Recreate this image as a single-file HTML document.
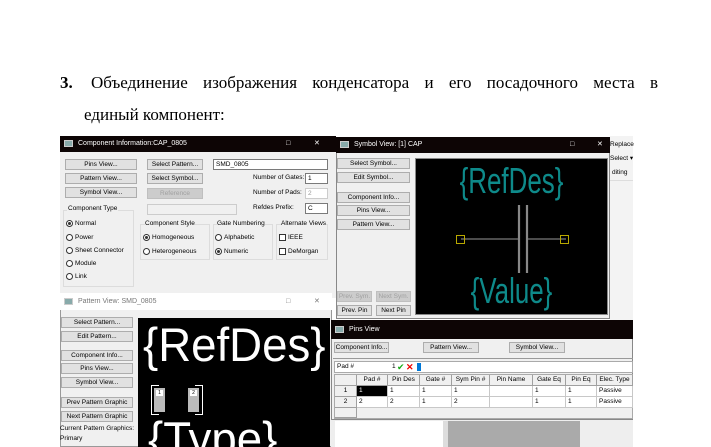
<!DOCTYPE html>
<html><head><meta charset="utf-8"><style>
*{margin:0;padding:0;box-sizing:border-box}
body{width:711px;height:447px;background:#fff;position:relative;overflow:hidden;font-family:"Liberation Sans",sans-serif}
.a{position:absolute}
.t{font-family:"Liberation Serif","DejaVu Serif",serif;font-size:17px;color:#000;white-space:nowrap}
.s{font-size:6.5px;color:#000;white-space:nowrap;line-height:1}
.btn{position:absolute;background:#e1e1e1;border:1px solid #adadad;font-size:6.5px;text-align:center;line-height:9px;color:#000;white-space:nowrap}
.dis{color:#a0a0a0;background:#ccc;border-color:#bfbfbf}
.box{position:absolute;background:#fff;border:1px solid #7a7a7a;font-size:6.5px;line-height:9px;padding-left:2px}
.grp{position:absolute;border:1px solid #dcdcdc}
.rd{position:absolute;width:7px;height:7px;border:1px solid #333;border-radius:50%;background:#fff}
.rd.on::after{content:"";position:absolute;left:1px;top:1px;width:3px;height:3px;border-radius:50%;background:#333}
.cb{position:absolute;width:7px;height:7px;border:1px solid #333;background:#fff}
.tb{position:absolute;background:#0d0505;color:#fff;font-size:7px;line-height:15px;padding-left:18px}
.ic{position:absolute;left:4px;top:4px;width:9px;height:7px;background:#8aa;border:1px solid #ccc}
.cell{position:absolute;border-right:1px solid #c8c8c8;border-bottom:1px solid #c8c8c8;font-size:6.5px;line-height:9px;padding-left:2px;background:#fff;white-space:nowrap;overflow:hidden}
.hd{background:#f0f0f0;text-align:center;padding-left:0;border-color:#a0a0a0}
.sym{color:#0e8a8a;font-size:36px;line-height:36px;transform:scaleX(0.72);transform-origin:center top;text-align:center;white-space:nowrap}
</style></head><body>
<div class="a t" style="left:60px;top:73px;font-weight:bold">3.</div>
<div class="a t" style="left:91px;top:73px;width:567px;text-align:justify;text-align-last:justify">Объединение изображения конденсатора и его посадочного места в</div>
<div class="a t" style="left:84px;top:105px">единый компонент:</div>

<div class="a" style="left:610px;top:136px;width:23px;height:184px;background:#f3f3f3"></div>
<div class="a s" style="left:610px;top:142px">Replace</div>
<div class="a s" style="left:610px;top:156px">Select ▾</div>
<div class="a s" style="left:612px;top:170px">diting</div>
<div class="a" style="left:610px;top:180px;width:23px;height:1px;background:#ddd"></div>

<div class="a" style="left:60px;top:136px;width:276px;height:162px;background:#f0f0f0"></div>
<div class="tb" style="left:60px;top:136px;width:276px;height:16px"><div class="ic"></div>Component Information:CAP_0805<span style="position:absolute;left:226px">□</span><span style="position:absolute;left:254px">✕</span></div>
<div class="btn" style="left:65px;top:159px;width:72px;height:11px">Pins View...</div>
<div class="btn" style="left:65px;top:173px;width:72px;height:11px">Pattern View...</div>
<div class="btn" style="left:65px;top:187px;width:72px;height:11px">Symbol View...</div>
<div class="btn" style="left:147px;top:159px;width:56px;height:11px">Select Pattern...</div>
<div class="btn" style="left:147px;top:173px;width:56px;height:11px">Select Symbol...</div>
<div class="btn dis" style="left:147px;top:188px;width:56px;height:11px">Reference</div>
<div class="box" style="left:213px;top:159px;width:115px;height:11px">SMD_0805</div>
<div class="a s" style="left:253px;top:175px">Number of Gates:</div>
<div class="box" style="left:305px;top:173px;width:23px;height:11px">1</div>
<div class="a s" style="left:253px;top:190px">Number of Pads:</div>
<div class="box" style="left:305px;top:188px;width:23px;height:11px;border-color:#ccc;color:#999">2</div>
<div class="a s" style="left:253px;top:205px">Refdes Prefix:</div>
<div class="box" style="left:305px;top:203px;width:23px;height:11px">C</div>
<div class="box" style="left:147px;top:204px;width:90px;height:11px;border-color:#ccc;background:#f0f0f0"></div>
<div class="grp" style="left:63px;top:210px;width:71px;height:77px"></div>
<div class="a s" style="left:67px;top:206px;background:#f0f0f0;padding:0 1px">Component Type</div>
<div class="rd on" style="left:66px;top:220px"></div><div class="a s" style="left:75px;top:221px">Normal</div>
<div class="rd" style="left:66px;top:234px"></div><div class="a s" style="left:75px;top:235px">Power</div>
<div class="rd" style="left:66px;top:247px"></div><div class="a s" style="left:75px;top:248px">Sheet Connector</div>
<div class="rd" style="left:66px;top:260px"></div><div class="a s" style="left:75px;top:261px">Module</div>
<div class="rd" style="left:66px;top:273px"></div><div class="a s" style="left:75px;top:274px">Link</div>
<div class="grp" style="left:140px;top:224px;width:70px;height:36px"></div>
<div class="a s" style="left:145px;top:221px;background:#f0f0f0">Component Style</div>
<div class="rd on" style="left:143px;top:234px"></div><div class="a s" style="left:152px;top:235px">Homogeneous</div>
<div class="rd" style="left:143px;top:248px"></div><div class="a s" style="left:152px;top:249px">Heterogeneous</div>
<div class="grp" style="left:213px;top:224px;width:60px;height:36px"></div>
<div class="a s" style="left:217px;top:221px;background:#f0f0f0">Gate Numbering</div>
<div class="rd" style="left:215px;top:234px"></div><div class="a s" style="left:224px;top:235px">Alphabetic</div>
<div class="rd on" style="left:215px;top:248px"></div><div class="a s" style="left:224px;top:249px">Numeric</div>
<div class="grp" style="left:276px;top:224px;width:52px;height:36px"></div>
<div class="a s" style="left:281px;top:221px;background:#f0f0f0">Alternate Views</div>
<div class="cb" style="left:279px;top:234px"></div><div class="a s" style="left:288px;top:235px">IEEE</div>
<div class="cb" style="left:279px;top:248px"></div><div class="a s" style="left:288px;top:249px">DeMorgan</div>

<div class="a" style="left:336px;top:137px;width:274px;height:182px;background:#f0f0f0;border:1px solid #888"></div>
<div class="tb" style="left:336px;top:137px;width:274px;height:16px"><div class="ic"></div>Symbol View: [1] CAP<span style="position:absolute;left:234px">□</span><span style="position:absolute;left:261px">✕</span></div>
<div class="btn" style="left:337px;top:158px;width:73px;height:11px">Select Symbol...</div>
<div class="btn" style="left:337px;top:172px;width:73px;height:11px">Edit Symbol...</div>
<div class="btn" style="left:337px;top:192px;width:73px;height:11px">Component Info...</div>
<div class="btn" style="left:337px;top:205px;width:73px;height:11px">Pins View...</div>
<div class="btn" style="left:337px;top:219px;width:73px;height:11px">Pattern View...</div>
<div class="btn dis" style="left:337px;top:291px;width:35px;height:11px">Prev. Sym.</div>
<div class="btn dis" style="left:376px;top:291px;width:35px;height:11px">Next Sym.</div>
<div class="btn" style="left:337px;top:305px;width:35px;height:11px">Prev. Pin</div>
<div class="btn" style="left:376px;top:305px;width:35px;height:11px">Next Pin</div>
<div class="a" style="left:415px;top:158px;width:193px;height:157px;background:#000;border:1px solid #888;overflow:hidden">
<div class="a sym" style="left:0;width:191px;top:4px">{RefDes}</div>
<div class="a sym" style="left:0;width:191px;top:114px">{Value}</div>
<svg class="a" style="left:0;top:0" width="191" height="155"><g stroke="#999" stroke-width="1"><line x1="45" y1="80" x2="102" y2="80"/><line x1="112" y1="80" x2="150" y2="80"/></g><g stroke="#888" stroke-width="2.2"><line x1="103" y1="46" x2="103" y2="114"/><line x1="111" y1="46" x2="111" y2="114"/></g><g fill="none" stroke="#b8a800"><rect x="40.5" y="76.5" width="8" height="8"/><rect x="144.5" y="76.5" width="8" height="8"/></g></svg>
</div>

<div class="a" style="left:60px;top:293px;width:272px;height:154px;background:#f0f0f0;border:1px solid #999"></div>
<div class="a" style="left:60px;top:293px;width:272px;height:17px;background:#fff;font-size:7px;line-height:17px;color:#777;padding-left:18px"><div class="ic" style="top:5px"></div>Pattern View: SMD_0805<span style="position:absolute;left:226px">□</span><span style="position:absolute;left:254px">✕</span></div>
<div class="btn" style="left:61px;top:317px;width:72px;height:11px">Select Pattern...</div>
<div class="btn" style="left:61px;top:331px;width:72px;height:11px">Edit Pattern...</div>
<div class="btn" style="left:61px;top:350px;width:72px;height:11px">Component Info...</div>
<div class="btn" style="left:61px;top:363px;width:72px;height:11px">Pins View...</div>
<div class="btn" style="left:61px;top:377px;width:72px;height:11px">Symbol View...</div>
<div class="btn" style="left:61px;top:397px;width:72px;height:11px">Prev Pattern Graphic</div>
<div class="btn" style="left:61px;top:411px;width:72px;height:11px">Next Pattern Graphic</div>
<div class="a s" style="left:60px;top:426px">Current Pattern Graphics:</div>
<div class="a s" style="left:60px;top:436px">Primary</div>
<div class="a" style="left:138px;top:318px;width:192px;height:129px;background:#000;overflow:hidden">
<div class="a" style="left:5px;top:2px;color:#fff;font-size:47px;line-height:50px;white-space:nowrap;transform:scaleX(0.97);transform-origin:left top">{RefDes}</div>
<div class="a" style="left:10px;top:96px;color:#fff;font-size:47px;line-height:50px;white-space:nowrap;transform:scaleX(0.97);transform-origin:left top">{Type}</div>
<div class="a" style="left:13px;top:67px;width:8px;height:30px;border:1.5px solid #fff;border-right:none"></div>
<div class="a" style="left:16px;top:70px;width:11px;height:24px;background:#bbb"></div>
<div class="a" style="left:18px;top:72px;width:7px;height:6px;background:#fff;font-size:5px;line-height:6px;text-align:center">1</div>
<div class="a" style="left:57px;top:67px;width:8px;height:30px;border:1.5px solid #fff;border-left:none"></div>
<div class="a" style="left:50px;top:70px;width:11px;height:24px;background:#bbb"></div>
<div class="a" style="left:52px;top:72px;width:7px;height:6px;background:#fff;font-size:5px;line-height:6px;text-align:center">2</div>
</div>

<div class="a" style="left:331px;top:320px;width:302px;height:100px;background:#f0f0f0;border:1px solid #888"></div>
<div class="tb" style="left:331px;top:320px;width:302px;height:19px;line-height:19px"><div class="ic" style="top:6px"></div>Pins View</div>
<div class="btn" style="left:334px;top:342px;width:55px;height:11px">Component Info...</div>
<div class="btn" style="left:423px;top:342px;width:56px;height:11px">Pattern View...</div>
<div class="btn" style="left:509px;top:342px;width:56px;height:11px">Symbol View...</div>
<div class="a" style="left:333px;top:358px;width:300px;height:1px;background:#999"></div>
<div class="a" style="left:334px;top:361px;width:299px;height:12px;background:#fff;border:1px solid #aaa"></div>
<div class="a s" style="left:337px;top:364px">Pad #</div>
<div class="a s" style="left:392px;top:364px">1</div>
<div class="a" style="left:397px;top:362px;width:9px;height:10px;color:#1a1;font-size:9px;line-height:10px">✔</div>
<div class="a" style="left:406px;top:362px;width:9px;height:10px;color:#e00;font-size:9px;line-height:10px;font-weight:bold">✕</div>
<div class="a" style="left:417px;top:363px;width:4px;height:8px;background:#0078d7"></div>
<div class="a" style="left:334px;top:374px;width:299px;height:45px;background:#f0f0f0;border:1px solid #aaa"></div>
<div class="cell hd" style="left:335px;top:375px;width:22px;height:11px"></div>
<div class="cell hd" style="left:357px;top:375px;width:31px;height:11px">Pad #</div>
<div class="cell hd" style="left:388px;top:375px;width:32px;height:11px">Pin Des</div>
<div class="cell hd" style="left:420px;top:375px;width:32px;height:11px">Gate #</div>
<div class="cell hd" style="left:452px;top:375px;width:38px;height:11px">Sym Pin #</div>
<div class="cell hd" style="left:490px;top:375px;width:43px;height:11px">Pin Name</div>
<div class="cell hd" style="left:533px;top:375px;width:33px;height:11px">Gate Eq</div>
<div class="cell hd" style="left:566px;top:375px;width:31px;height:11px">Pin Eq</div>
<div class="cell hd" style="left:597px;top:375px;width:36px;height:11px">Elec. Type</div>
<div class="cell hd" style="left:335px;top:386px;width:22px;height:11px">1</div>
<div class="cell" style="left:357px;top:386px;width:31px;height:11px;background:#000;color:#fff">1</div>
<div class="cell" style="left:388px;top:386px;width:32px;height:11px">1</div>
<div class="cell" style="left:420px;top:386px;width:32px;height:11px">1</div>
<div class="cell" style="left:452px;top:386px;width:38px;height:11px">1</div>
<div class="cell" style="left:490px;top:386px;width:43px;height:11px"></div>
<div class="cell" style="left:533px;top:386px;width:33px;height:11px">1</div>
<div class="cell" style="left:566px;top:386px;width:31px;height:11px">1</div>
<div class="cell" style="left:597px;top:386px;width:36px;height:11px">Passive</div>
<div class="cell hd" style="left:335px;top:397px;width:22px;height:11px">2</div>
<div class="cell" style="left:357px;top:397px;width:31px;height:11px">2</div>
<div class="cell" style="left:388px;top:397px;width:32px;height:11px">2</div>
<div class="cell" style="left:420px;top:397px;width:32px;height:11px">1</div>
<div class="cell" style="left:452px;top:397px;width:38px;height:11px">2</div>
<div class="cell" style="left:490px;top:397px;width:43px;height:11px"></div>
<div class="cell" style="left:533px;top:397px;width:33px;height:11px">1</div>
<div class="cell" style="left:566px;top:397px;width:31px;height:11px">1</div>
<div class="cell" style="left:597px;top:397px;width:36px;height:11px">Passive</div>
<div class="cell hd" style="left:335px;top:408px;width:22px;height:10px"></div>

<div class="a" style="left:331px;top:420px;width:302px;height:27px;background:#eee"></div>
<div class="a" style="left:335px;top:421px;width:108px;height:26px;background:#fff"></div>
<div class="a" style="left:443px;top:421px;width:5px;height:26px;background:#ddd"></div>
<div class="a" style="left:448px;top:421px;width:132px;height:26px;background:#aaa"></div>
</body></html>
